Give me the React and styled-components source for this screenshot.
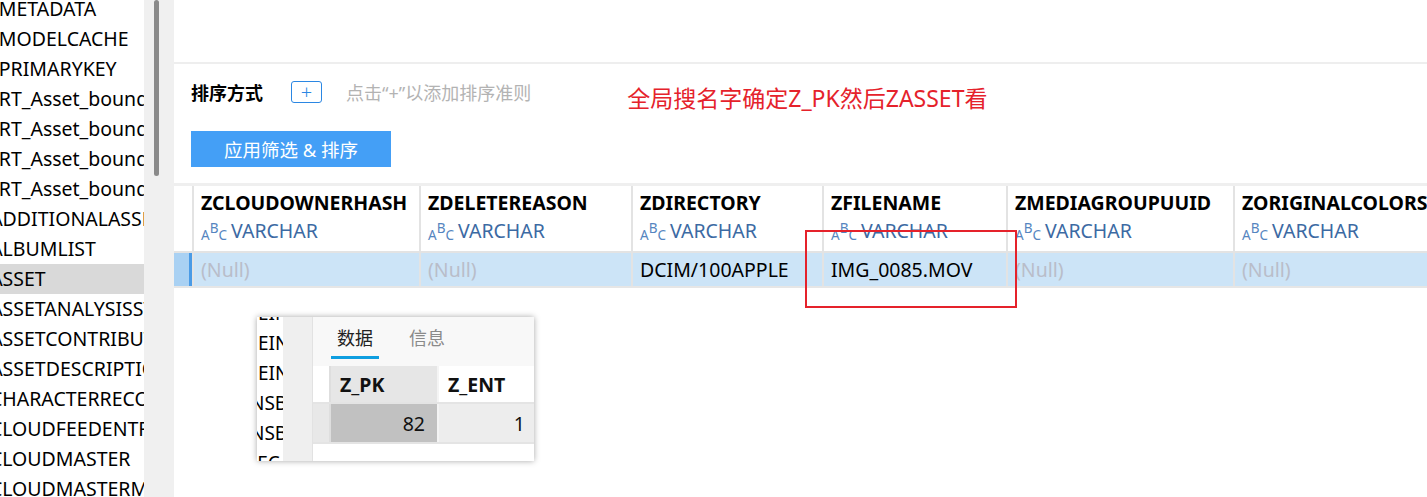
import React from 'react'
import styled, {createGlobalStyle, css} from 'styled-components'

const GlobalStyle = createGlobalStyle`
    html, body {
        margin: 0;
        padding: 0;
        background: #fff;
    }
    body {
        font-family: 'Noto Sans', 'Noto Sans CJK SC', sans-serif;
    }
`

const Screen = styled.div`
    position: relative;
    display: flex;
    width: 1427px;
    height: 497px;
    overflow: hidden;
    background: #fff;
`

/* ---------- sidebar ---------- */

const Sidebar = styled.div`
    display: flex;
    flex-shrink: 0;
    width: 174px;
    height: 100%;
`

const TableList = styled.ul`
    list-style: none;
    margin: -6px 0 0 0;
    padding: 0;
    width: 144px;
    overflow: hidden;
`

const TableItem = styled.li`
    height: 30px;
    line-height: 30px;
    font-size: 19.5px;
    color: #000;
    white-space: nowrap;
    text-indent: -21px;

    ${props => props.selected && css`
        background: #d9d9d9;
    `}
`

const ScrollTrack = styled.div`
    display: flex;
    justify-content: center;
    width: 30px;
    padding-right: 6px;
    box-sizing: border-box;
    background: #f0f0f0;
`

const ScrollThumb = styled.div`
    width: 5px;
    height: 176px;
    border-radius: 3px;
    background: #8a8a8a;
`

/* ---------- main ---------- */

const Main = styled.div`
    display: flex;
    flex: 1;
    flex-direction: column;
    min-width: 0;
`

const TopBar = styled.div`
    height: 62px;
    border-bottom: 2px solid #eeeeee;
`

const SortPanel = styled.div`
    display: flex;
    flex-direction: column;
    padding: 17px 0 16px 17px;
`

const SortRow = styled.div`
    display: flex;
    align-items: center;
    height: 22px;
`

const SortLabel = styled.span`
    font-size: 18px;
    font-weight: 700;
    color: #000;
    margin-right: 28px;
`

const AddButton = styled.button`
    display: flex;
    align-items: center;
    justify-content: center;
    width: 31px;
    height: 22px;
    padding: 0;
    border: 1px solid #2b87e3;
    border-radius: 3px;
    background: #fff;
    color: #2b87e3;
    font-family: 'Noto Sans', sans-serif;
    font-size: 20px;
    font-weight: 300;
    line-height: 1;
    margin-right: 24px;
`

const Hint = styled.span`
    font-size: 18px;
    color: #b3b3b3;
    white-space: nowrap;
`

const Note = styled.span`
    margin: 10px 0 0 96px;
    font-size: 23px;
    color: #e5222b;
    white-space: nowrap;
`

const ApplyButton = styled.button`
    width: 200px;
    height: 36px;
    margin-top: 28px;
    border: none;
    background: #449ff6;
    color: #fff;
    font-family: 'Noto Sans', 'Noto Sans CJK SC', sans-serif;
    font-size: 18.5px;
    padding: 0;
`

/* ---------- result grid ---------- */

const Grid = styled.div`
    display: flex;
    flex-direction: column;
    border-top: 3px solid #efefef;
    border-bottom: 2px solid #e6e6e6;
`

const GridRow = styled.div`
    display: flex;
    height: ${props => props.height}px;
    background: ${props => props.bg || '#fff'};

    & + & {
        border-top: 2px solid #e3e3e3;
    }
`

const Gutter = styled.div`
    flex-shrink: 0;
    width: 18px;
    box-sizing: border-box;

    ${props => props.active && css`
        background: #a9d1f3;
        border-right: 3px solid #4a9be6;
    `}
`

const Cell = styled.div`
    display: flex;
    flex-direction: column;
    flex-shrink: 0;
    width: ${props => props.width}px;
    box-sizing: border-box;
    border-left: 2px solid #e3e3e3;
    padding: ${props => props.header ? '5px 0 0 7px' : '0 0 0 7px'};
    justify-content: ${props => props.header ? 'flex-start' : 'center'};
    overflow: hidden;
    white-space: nowrap;
`

const ColName = styled.div`
    height: 24px;
    line-height: 24px;
    font-size: 19.5px;
    font-weight: 700;
    color: #000;
`

const ColType = styled.div`
    display: flex;
    align-items: center;
    height: 24px;
    margin-top: 3px;
    font-size: 19.5px;
    color: #3c6aa3;
`

const Abc = styled.span`
    display: inline-flex;
    align-items: flex-end;
    width: 20px;
    height: 19px;
    margin: 4px 10px 0 0;
    font-size: 13.5px;
    line-height: 13px;
    color: #5585c0;
`

const AbcUp = styled.span`
    align-self: flex-start;
    margin-top: -1px;
`

const Value = styled.span`
    font-size: 19.5px;
    color: ${props => props.empty ? '#b9bdc9' : '#000'};
`

const Highlight = styled.div`
    position: absolute;
    left: 805px;
    top: 230px;
    width: 212px;
    height: 78px;
    box-sizing: border-box;
    border: 2px solid #e5222b;
`

/* ---------- popup snapshot ---------- */

const Popup = styled.div`
    position: absolute;
    left: 257px;
    top: 317px;
    display: flex;
    width: 277px;
    height: 144px;
    background: #fff;
    box-shadow: 0 0 6px rgba(0, 0, 0, 0.35);
    overflow: hidden;
`

const PopupList = styled.ul`
    list-style: none;
    margin: -19px 0 0 0;
    padding: 0;
    width: 26px;
    flex-shrink: 0;
    overflow: hidden;
`

const PopupItem = styled.li`
    height: 30px;
    line-height: 30px;
    font-size: 19px;
    color: #000;
    white-space: nowrap;
    text-indent: ${props => props.shift || 1}px;
`

const PopupStrip = styled.div`
    width: 29px;
    flex-shrink: 0;
    background: #efefef;
    border-right: 1px solid #e2e2e2;
`

const PopupBody = styled.div`
    display: flex;
    flex: 1;
    flex-direction: column;
    min-width: 0;
`

const TabBar = styled.div`
    display: flex;
    height: 49px;
    padding-left: 18px;
    gap: 24px;
    background: #f8f8f8;
    box-sizing: border-box;
`

const Tab = styled.div`
    display: flex;
    align-items: center;
    height: 42px;
    padding: 0 6px;
    font-size: 18px;
    color: ${props => props.active ? '#222' : '#8a8a8a'};
    border-bottom: 3px solid ${props => props.active ? '#0f9ee0' : 'transparent'};
    box-sizing: border-box;
`

const MiniRow = styled.div`
    display: flex;
    height: ${props => props.height}px;
    border-bottom: 2px solid #e4e4e4;
`

const MiniGutter = styled.div`
    width: 18px;
    flex-shrink: 0;
    box-sizing: border-box;
    background: ${props => props.bg || '#fff'};
    border-right: 2px solid #dedede;
`

const MiniCell = styled.div`
    display: flex;
    align-items: center;
    justify-content: ${props => props.right ? 'flex-end' : 'flex-start'};
    flex-shrink: 0;
    width: ${props => props.width}px;
    box-sizing: border-box;
    padding: ${props => props.right ? '0 12px 0 0' : '0 0 0 9px'};
    background: ${props => props.bg};
    border-right: 2px solid #f4f4f4;
    font-size: 19.5px;
    font-weight: ${props => props.bold ? 700 : 400};
    color: #111;
    white-space: nowrap;
`

const tables = [
    'Z_METADATA',
    'Z_MODELCACHE',
    'Z_PRIMARYKEY',
    'Z_RT_Asset_boundedByRect',
    'Z_RT_Asset_boundedByRect_node',
    'Z_RT_Asset_boundedByRect_parent',
    'Z_RT_Asset_boundedByRect_rowid',
    'ZADDITIONALASSETATTRIBUTES',
    'ZALBUMLIST',
    'ZASSET',
    'ZASSETANALYSISSTATE',
    'ZASSETCONTRIBUTOR',
    'ZASSETDESCRIPTION',
    'ZCHARACTERRECOGNITIONATTRIBUTES',
    'ZCLOUDFEEDENTRY',
    'ZCLOUDMASTER',
    'ZCLOUDMASTERMEDIAMETADATA',
]

const columns = [
    {name: 'ZCLOUDOWNERHASH', width: 227, value: null},
    {name: 'ZDELETEREASON', width: 212, value: null},
    {name: 'ZDIRECTORY', width: 191, value: 'DCIM/100APPLE'},
    {name: 'ZFILENAME', width: 184, value: 'IMG_0085.MOV'},
    {name: 'ZMEDIAGROUPUUID', width: 227, value: null},
    {name: 'ZORIGINALCOLORSPACE', width: 240, value: null},
]

const popupItems = [
    {text: 'EIN'},
    {text: 'EIN'},
    {text: 'EIN'},
    {text: 'NSB', shift: -7},
    {text: 'NSB', shift: -7},
    {text: 'JEC', shift: -5},
]

class App extends React.Component {
    render() {
        return (
            <Screen>
                <GlobalStyle />

                <Sidebar>
                    <TableList>
                        {tables.map(t => (
                            <TableItem key={t} selected={t === 'ZASSET'}>{t}</TableItem>
                        ))}
                    </TableList>
                    <ScrollTrack>
                        <ScrollThumb />
                    </ScrollTrack>
                </Sidebar>

                <Main>
                    <TopBar />

                    <SortPanel>
                        <SortRow>
                            <SortLabel>排序方式</SortLabel>
                            <AddButton>+</AddButton>
                            <Hint>点击“+”以添加排序准则</Hint>
                            <Note>全局搜名字确定Z_PK然后ZASSET看</Note>
                        </SortRow>
                        <ApplyButton>应用筛选 &amp; 排序</ApplyButton>
                    </SortPanel>

                    <Grid>
                        <GridRow height={65}>
                            <Gutter />
                            {columns.map(c => (
                                <Cell key={c.name} width={c.width} header>
                                    <ColName>{c.name}</ColName>
                                    <ColType>
                                        <Abc>A<AbcUp>B</AbcUp>C</Abc>
                                        VARCHAR
                                    </ColType>
                                </Cell>
                            ))}
                        </GridRow>
                        <GridRow height={33} bg="#cce4f7">
                            <Gutter active />
                            {columns.map(c => (
                                <Cell key={c.name} width={c.width}>
                                    <Value empty={!c.value}>{c.value || '(Null)'}</Value>
                                </Cell>
                            ))}
                        </GridRow>
                    </Grid>
                </Main>

                <Highlight />

                <Popup>
                    <PopupList>
                        {popupItems.map((p, i) => (
                            <PopupItem key={i} shift={p.shift}>{p.text}</PopupItem>
                        ))}
                    </PopupList>
                    <PopupStrip />
                    <PopupBody>
                        <TabBar>
                            <Tab active>数据</Tab>
                            <Tab>信息</Tab>
                        </TabBar>
                        <MiniRow height={36}>
                            <MiniGutter />
                            <MiniCell width={108} bg="#e6e6e6" bold>Z_PK</MiniCell>
                            <MiniCell width={100} bg="#fff" bold>Z_ENT</MiniCell>
                        </MiniRow>
                        <MiniRow height={38}>
                            <MiniGutter bg="#e8e8e8" />
                            <MiniCell width={108} bg="#c1c1c1" right>82</MiniCell>
                            <MiniCell width={100} bg="#ededed" right>1</MiniCell>
                        </MiniRow>
                    </PopupBody>
                </Popup>
            </Screen>
        )
    }
}

export default App
